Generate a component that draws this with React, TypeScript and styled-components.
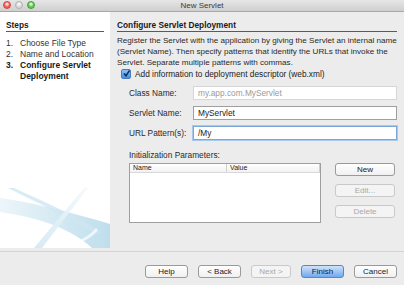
import styled, { createGlobalStyle } from "styled-components";

const Global = createGlobalStyle`
  html, body { margin: 0; padding: 0; }
  body {
    width: 404px;
    height: 285px;
    overflow: hidden;
    background: #ececec;
    font-family: "Liberation Sans", Arial, sans-serif;
    font-size: 8.3px;
    color: #1a1a1a;
  }
`;

const Window = styled.div`
  width: 404px;
  height: 285px;
  display: flex;
  flex-direction: column;
  background: #ececec;
`;

const TitleBar = styled.div`
  height: 11px;
  flex: none;
  position: relative;
  display: flex;
  align-items: center;
  justify-content: center;
  background: linear-gradient(#e6e6e6, #cfcfcf);
  border-bottom: 1px solid #a8a8a8;
  font-size: 8px;
  color: #3b3b3b;
`;

const Lights = styled.div`
  position: absolute;
  left: 3px;
  top: 1px;
  display: flex;
  gap: 4px;
`;

const Light = styled.span<{ c: string; b: string }>`
  width: 6px;
  height: 6px;
  border-radius: 50%;
  background: radial-gradient(circle at 50% 35%, #fff 0, ${p => p.c} 55%);
  border: 1px solid ${p => p.b};
`;

const Body = styled.div`
  flex: none;
  height: 236px;
  display: flex;
`;

const StepsPane = styled.div`
  width: 104px;
  flex: none;
  background: #fff;
  padding: 8px 0 0 6px;
  position: relative;
  overflow: hidden;
`;

const Heading = styled.div<{ w?: string }>`
  font-weight: bold;
  font-size: 8.3px;
  line-height: 10px;
  padding-bottom: 1px;
  border-bottom: 1px solid #5a5a5a;
  width: ${p => p.w || "auto"};
`;

const StepList = styled.ol`
  list-style: none;
  margin: 6px 0 0 0;
  padding: 0;
`;

const Step = styled.li<{ current?: boolean }>`
  display: flex;
  line-height: 11px;
  font-size: 8.5px;
  color: ${p => (p.current ? "#1a1a1a" : "#333")};
  font-weight: ${p => (p.current ? "bold" : "normal")};
  span:first-child { width: 14px; flex: none; }
  span:last-child { width: 80px; }
`;

const Swoosh = styled.svg`
  position: absolute;
  left: 0;
  bottom: 0;
`;

const Main = styled.div`
  flex: 1;
  min-width: 0;
  padding: 8px 7px 0 7px;
`;

const Desc = styled.p`
  margin: 3px 0 0 0;
  font-size: 8.1px;
  line-height: 11px;
  white-space: nowrap;
  color: #2a2a2a;
`;

const CheckRow = styled.label`
  display: flex;
  align-items: center;
  gap: 4px;
  margin: 0 0 0 4px;
  height: 11px;
`;

const Box = styled.span`
  width: 8px;
  height: 8px;
  border-radius: 2px;
  background: linear-gradient(#8fc0f5, #3e8fe6);
  border: 1px solid #4a7cbf;
  display: flex;
  align-items: center;
  justify-content: center;
`;

const Form = styled.div`
  margin: 7px 0 0 12px;
  display: flex;
  flex-direction: column;
  gap: 6px;
`;

const FieldRow = styled.div`
  display: flex;
  align-items: center;
`;

const Label = styled.span`
  width: 64px;
  flex: none;
  color: #2a2a2a;
`;

const Input = styled.div<{ disabled?: boolean; focused?: boolean }>`
  flex: 1;
  height: 12px;
  line-height: 12px;
  padding: 0 4px;
  background: #fff;
  border: 1px solid ${p => (p.focused ? "#7aa7dc" : p.disabled ? "#d6d6d6" : "#9f9f9f")};
  box-shadow: ${p => (p.focused ? "0 0 0 1px #a9c8ee" : "none")};
  color: ${p => (p.disabled ? "#9a9a9a" : "#1a1a1a")};
`;

const ParamsLabel = styled.div`
  margin: 10px 0 0 12px;
  color: #2a2a2a;
`;

const ParamsRow = styled.div`
  display: flex;
  margin: 3px 0 0 12px;
  gap: 14px;
`;

const Table = styled.div`
  width: 190px;
  height: 58px;
  background: #fff;
  border: 1px solid #9f9f9f;
`;

const THead = styled.div`
  display: flex;
  height: 8px;
  line-height: 8px;
  font-size: 7px;
  border-bottom: 1px solid #d8d8d8;
  background: linear-gradient(#fff, #f2f2f2);
`;

const Col = styled.span<{ w: string }>`
  width: ${p => p.w};
  padding-left: 3px;
  border-right: 1px solid #cfcfcf;
`;

const SideButtons = styled.div`
  display: flex;
  flex-direction: column;
  gap: 8px;
`;

const Button = styled.button<{ w: string; primary?: boolean }>`
  width: ${p => p.w};
  height: 13px;
  padding: 0;
  font-family: inherit;
  font-size: 8px;
  line-height: 11px;
  border-radius: 3px;
  border: 1px solid ${p => (p.primary ? "#5a87c3" : "#9a9a9a")};
  background: ${p =>
    p.primary ? "linear-gradient(#cfe3fb, #6fa9ee)" : "linear-gradient(#ffffff, #f0f0f0)"};
  color: #1a1a1a;
  &:disabled {
    color: #a8a8a8;
    border-color: #c9c9c9;
    background: #f4f4f4;
  }
`;

const Divider = styled.div`
  height: 1px;
  flex: none;
  margin-top: 3px;
  background: #d4d4d4;
`;

const Footer = styled.div`
  display: flex;
  justify-content: flex-end;
  padding: 13px 7px 0 0;
  gap: 10px;
`;

export default function App() {
  return (
    <Window>
      <Global />
      <TitleBar>
        <Lights>
          <Light c="#f25d58" b="#c9443f" />
          <Light c="#d9d9d9" b="#b0b0b0" />
          <Light c="#5fcb4f" b="#3d9d35" />
        </Lights>
        New Servlet
      </TitleBar>
      <Body>
        <StepsPane>
          <Heading w="98px">Steps</Heading>
          <StepList>
            <Step><span>1.</span><span>Choose File Type</span></Step>
            <Step><span>2.</span><span>Name and Location</span></Step>
            <Step current><span>3.</span><span>Configure Servlet Deployment</span></Step>
          </StepList>
          <Swoosh width="110" height="60" viewBox="0 0 110 60">
            <defs>
              <linearGradient id="sw" x1="0" x2="1" y1="0" y2="0">
                <stop offset="0" stopColor="#e6f2f8" />
                <stop offset="1" stopColor="#a9d3e6" />
              </linearGradient>
              <linearGradient id="sw2" x1="0" x2="1" y1="1" y2="0">
                <stop offset="0" stopColor="#d2e8f2" />
                <stop offset="1" stopColor="#f4f9fc" />
              </linearGradient>
            </defs>
            <path d="M0 10 C30 14 70 24 110 36 L110 60 L92 60 C70 40 40 30 0 24 Z" fill="url(#sw)" opacity="0.75" />
            <path d="M8 0 L14 0 C50 16 80 30 100 44 L96 46 C70 30 40 16 8 0 Z" fill="#cfe6f1" opacity="0.8" />
            <path d="M34 60 L84 0 L88 0 L42 60 Z" fill="url(#sw2)" opacity="0.9" />
            <path d="M60 60 C75 54 88 50 96 40 L98 42 C90 52 78 56 66 60 Z" fill="#fff" opacity="0.7" />
          </Swoosh>
        </StepsPane>
        <Main>
          <Heading>Configure Servlet Deployment</Heading>
          <Desc>
            Register the Servlet with the application by giving the Servlet an internal name
            <br />
            (Servlet Name). Then specify patterns that identify the URLs that invoke the
            <br />
            Servlet. Separate multiple patterns with commas.
          </Desc>
          <CheckRow>
            <Box>
              <svg width="7" height="7" viewBox="0 0 7 7">
                <path d="M1 3.5 L3 5.8 L6.5 0.5" stroke="#0d2a55" strokeWidth="1.5" fill="none" />
              </svg>
            </Box>
            Add information to deployment descriptor (web.xml)
          </CheckRow>
          <Form>
            <FieldRow><Label>Class Name:</Label><Input disabled>my.app.com.MyServlet</Input></FieldRow>
            <FieldRow><Label>Servlet Name:</Label><Input>MyServlet</Input></FieldRow>
            <FieldRow><Label>URL Pattern(s):</Label><Input focused>/My</Input></FieldRow>
          </Form>
          <ParamsLabel>Initialization Parameters:</ParamsLabel>
          <ParamsRow>
            <Table>
              <THead><Col w="94px">Name</Col><Col w="90px">Value</Col></THead>
            </Table>
            <SideButtons>
              <Button w="60px">New</Button>
              <Button w="60px" disabled>Edit...</Button>
              <Button w="60px" disabled>Delete</Button>
            </SideButtons>
          </ParamsRow>
        </Main>
      </Body>
      <Divider />
      <Footer>
        <Button w="43px">Help</Button>
        <Button w="43px">&lt; Back</Button>
        <Button w="40px" disabled>Next &gt;</Button>
        <Button w="43px" primary>Finish</Button>
        <Button w="43px">Cancel</Button>
      </Footer>
    </Window>
  );
}
